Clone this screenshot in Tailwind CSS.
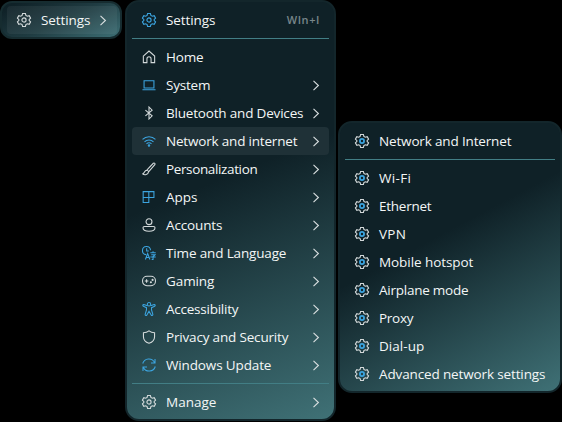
<!DOCTYPE html>
<html lang="en">
<head>
<meta charset="utf-8">
<title>Settings menu</title>
<script src="https://cdn.jsdelivr.net/npm/@tailwindcss/browser@4"></script>
</head>
<body class="bg-black w-[562px] h-[422px] overflow-hidden font-['Open_Sans','Noto_Sans',sans-serif] text-[13.5px] text-[#f3f6f6]">
<svg class="hidden">
  <defs>
    <symbol id="gear" viewBox="0 0 16 16"><path d="M6.5 1.100h3l.5 2 1.500.9 2-.6 1.500 2.600L13.500 7.400v1.200l1.500 1.400-1.500 2.600-2-.6-1.500.9-.5 2h-3l-.5-2-1.500-.9-2 .6L1 10l1.500-1.400V7.400L1 6l1.500-2.600 2 .6L6 3.100z"/></symbol>
    <symbol id="hub" viewBox="0 0 16 16"><circle cx="8" cy="8" r="2.200"/></symbol>
    <symbol id="home" viewBox="0 0 16 16"><path d="M1.700 7 8 1.400 14.300 7v7.300h-4V10a2.300 2.300 0 0 0-4.600 0v4.300h-4z"/></symbol>
    <symbol id="system" viewBox="0 0 16 16"><path d="M2.500 3.300h11v8h-11zM.7 13.300h14.600"/></symbol>
    <symbol id="bluetooth" viewBox="0 0 16 16"><path d="m4 4.700 7.500 6.500L8 14.700V1.300l3.500 3.500L4 11.300"/></symbol>
    <symbol id="wifi" viewBox="0 0 16 16"><path d="M.8 6.300a10.200 10.200 0 0 1 14.400 0M3 8.900a7.100 7.100 0 0 1 10 0M5.200 11.300a4 4 0 0 1 5.600 0"/><circle cx="8" cy="13.100" r=".8"/></symbol>
    <symbol id="brush" viewBox="0 0 16 16"><path d="M5.500 9.300 12.800 1.600c1.300-.9 2.500.4 1.700 1.600l-7 8M5.500 9.300c-3 .2-2 3.500-4.600 4.200 2.300 1.800 6 .9 6.600-2.300-.1-1.200-.9-1.800-2-1.900z"/></symbol>
    <symbol id="apps" viewBox="0 0 16 16"><path d="M1.500 2h12v6.500H1.500zM1.500 2v12.200h6.300V2M1.500 8.500h6.300"/></symbol>
    <symbol id="accounts" viewBox="0 0 16 16"><circle cx="8" cy="4.300" r="3.300"/><path d="M3 9.700h10q1.700 0 1.700 1.500c0 2.500-3 3.800-6.700 3.800s-6.700-1.300-6.700-3.800q0-1.500 1.700-1.500z"/></symbol>
    <symbol id="time" viewBox="0 0 16 16"><path d="M4.800 9.800A4.500 4.500 0 1 1 9.700 5M5.400 2.800v3h2.400M4 15.300l2.500-6.800L9 15.300M4.900 13h3.200M9.500 7.700h6M12.500 6v1.700M10.500 10h4.200l-2.200 2v3.300h-1.500M9.500 12.500h6"/></symbol>
    <symbol id="gaming" viewBox="0 0 16 16"><rect x=".8" y="2.700" width="14.400" height="10.600" rx="4.900"/><path d="M5.300 6v4M3.300 8h4"/><circle cx="10.100" cy="9.400" r=".6"/><circle cx="12" cy="6.800" r=".6"/></symbol>
    <symbol id="access" viewBox="0 0 16 16"><circle cx="8" cy="2.700" r="1.900"/><path d="M6.200 4.400 2.300 3c-1.200-.2-1.700 1.500-.6 2l3.500 1.500v2.600L3.700 14c-.2 1.200 1.300 1.700 1.900.6L8 10.500l2.400 4.100c.6 1.100 2.100.6 1.900-.6l-1.500-4.900V6.500L14.300 5c1.100-.5.6-2.200-.6-2L9.800 4.400"/></symbol>
    <symbol id="shield" viewBox="0 0 16 16"><path d="M8 1.100c1.900 1.500 3.800 2.100 6.200 2.200v4.300c0 3.700-2.400 6-6.200 7.400-3.800-1.400-6.200-3.700-6.200-7.400V3.300C4.200 3.200 6.100 2.600 8 1.100z"/></symbol>
    <symbol id="update" viewBox="0 0 16 16"><path d="M1 6.300a7.100 7.100 0 0 1 13.200-1M14.700 1.200v4.500h-4.500M15 9.700a7.100 7.100 0 0 1-13.200 1M1.300 14.800v-4.500h4.500"/></symbol>
    <symbol id="chevron" viewBox="0 0 7 11"><path d="m.5.900 4.900 4.600L.5 10.100"/></symbol>
  </defs>
</svg>

<main class="flex items-start">
  <section class="mt-px mr-[3px] w-[122px] h-[38px] rounded-[12px] border-2 border-[#162c30] bg-[linear-gradient(155deg,#0f2127_10%,#1f3b41_50%,#3f7278_100%)] bg-origin-border py-[3px] pl-[5px] pr-[3px]">
    <div class="flex h-[28px] items-center rounded-[4px] bg-white/5 pl-[10px] pr-[10px]">
      <span data-icon="gear" data-tone="light"></span>
      <span class="ml-[10px] flex-1 whitespace-nowrap"><span data-w="49">Settings</span></span>
      <svg class="w-[7px] h-[11px] fill-none stroke-[#d9dfe0] stroke-[1.1]"><use href="#chevron"/></svg>
    </div>
  </section>

  <section class="mr-[2px] w-[211px] h-[421px] rounded-[14px] border-2 border-[#13262b] bg-[linear-gradient(158deg,#0f2127_43%,#407277_100%)] bg-origin-border pt-1 px-[5px]" id="main"></section>

  <section class="mt-[121px] w-[224px] h-[272px] rounded-[14px] border-2 border-[#13262b] bg-[linear-gradient(152deg,#0f2127_43%,#407277_100%)] bg-origin-border pt-1 px-[5px]" id="sub"></section>
</main>

<script>
const tones = { light: 'text-[#d3d9da]', blue: 'text-[#3ca4df]' };
function icon(name, tone) {
  const gear = name === 'gear';
  const hub = gear ? `<g class="${tone === 'mix' ? 'text-[#3ca4df] stroke-[1.9]' : ''}"><use href="#hub" width="16" height="16"/></g>` : '';
  return `<svg viewBox="${gear ? '0.6 0.6 14.8 14.8' : '0.2 0.2 15.6 15.6'}" class="block shrink-0 w-[14px] h-[14px] overflow-visible fill-none stroke-current stroke-[1.2] ${tones[tone === 'mix' ? 'light' : tone]}"><use href="#${name}" width="16" height="16"/>${hub}</svg>`;
}
const chevron = '<svg class="w-[7px] h-[11px] fill-none stroke-[#d9dfe0] stroke-[1.1]"><use href="#chevron"/></svg>';
function row([name, tone, label, width, end, active]) {
  return `<div class="flex h-[28px] items-center rounded-[4px] pl-[10px] pr-[9px] ${active ? 'bg-[#1f3137]' : ''}">${icon(name, tone)}
    <span class="ml-[10px] flex-1 whitespace-nowrap"><span data-w="${width}">${label}</span></span>${end || ''}</div>`;
}
const line = '<div class="my-1 h-px bg-[#427e85]"></div>';
const hint = '<span class="text-[11px] font-semibold text-[#78868a]"><span data-w="33">WIn+I</span></span>';
document.getElementById('main').innerHTML =
  row(['gear', 'blue', 'Settings', 49, hint]) + line +
  [
    ['home', 'light', 'Home', 37],
    ['system', 'blue', 'System', 44, chevron],
    ['bluetooth', 'light', 'Bluetooth and Devices', 137, chevron],
    ['wifi', 'blue', 'Network and internet', 131, chevron, true],
    ['brush', 'light', 'Personalization', 91, chevron],
    ['apps', 'blue', 'Apps', 31, chevron],
    ['accounts', 'light', 'Accounts', 56, chevron],
    ['time', 'blue', 'Time and Language', 120, chevron],
    ['gaming', 'light', 'Gaming', 48, chevron],
    ['access', 'blue', 'Accessibility', 72, chevron],
    ['shield', 'light', 'Privacy and Security', 122, chevron],
    ['update', 'blue', 'Windows Update', 105, chevron]
  ].map(row).join('') + line + row(['gear', 'light', 'Manage', 50, chevron]);
document.getElementById('sub').innerHTML =
  row(['gear', 'mix', 'Network and Internet', 132]) + line +
  [['Wi-Fi', 32], ['Ethernet', 52], ['VPN', 27], ['Mobile hotspot', 94], ['Airplane mode', 89], ['Proxy', 34], ['Dial-up', 45], ['Advanced network settings', 166]]
    .map(([label, width]) => row(['gear', 'mix', label, width])).join('');
document.querySelectorAll('[data-icon]').forEach(e => { e.innerHTML = icon(e.dataset.icon, e.dataset.tone); });
// Spread each label to its intended width; a second pass absorbs ligature and rounding changes.
function fit() {
  document.querySelectorAll('[data-w]').forEach(e => {
    e.style.letterSpacing = '0.01px';
    for (let i = 0; i < 2; i++) {
      const extra = Number(e.dataset.w) + 0.3 - e.getBoundingClientRect().width;
      e.style.letterSpacing = parseFloat(e.style.letterSpacing) + extra / e.textContent.length + 'px';
    }
  });
}
fit();
window.addEventListener('load', fit);
document.fonts.ready.then(fit);
</script>
</body>
</html>
